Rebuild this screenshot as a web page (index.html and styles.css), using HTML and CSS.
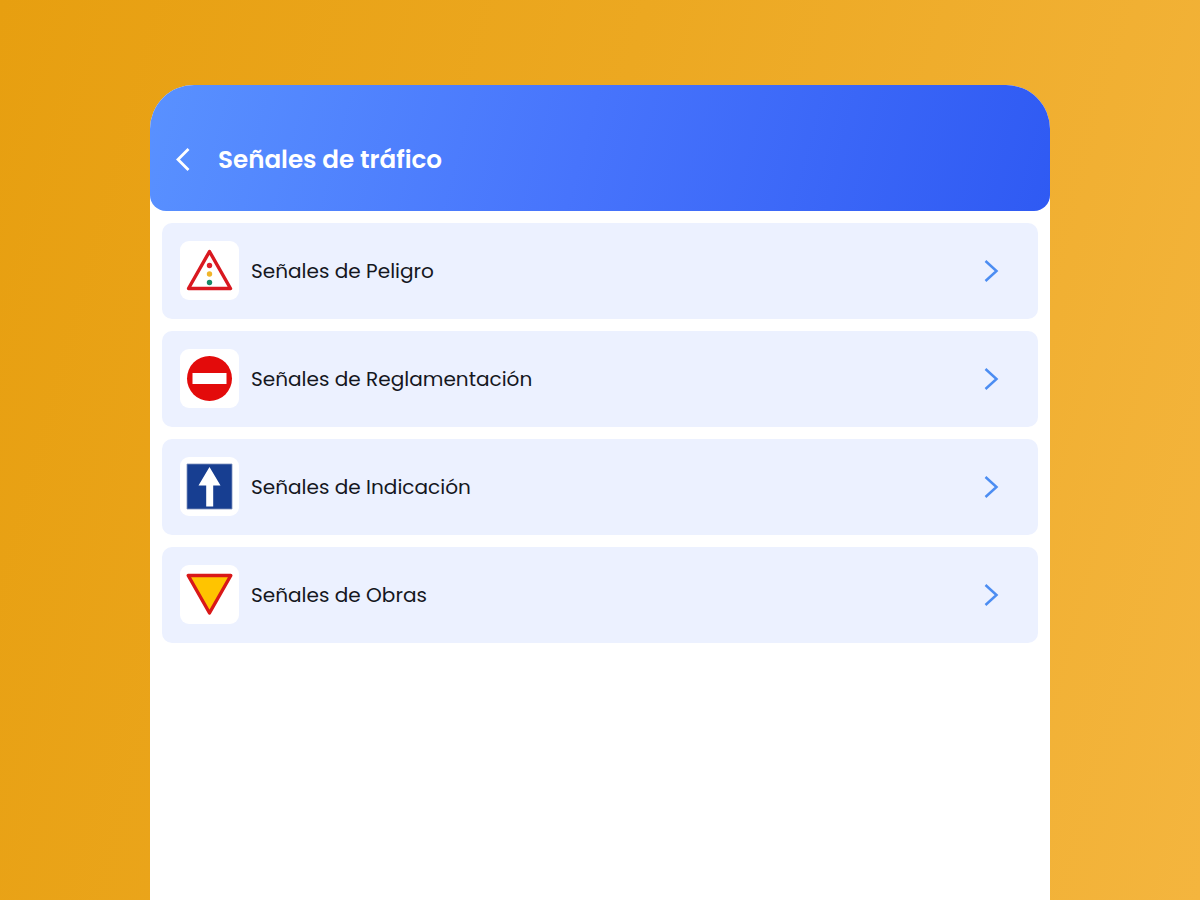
FILE: index.html
```html
<!DOCTYPE html>
<html lang="es">
<head>
<meta charset="utf-8">
<title>Señales de tráfico</title>
<link rel="stylesheet" href="styles.css">
</head>
<body>
<main class="screen">
  <header class="header">
    <svg class="back" viewBox="0 0 16 24"><path d="M14.500 1 4 11.500 14.500 22"/></svg>
    <h1 class="title">Señales de tráfico</h1>
  </header>
  <nav class="list">
    <a class="card">
      <span class="tile"><svg class="sign" viewBox="-.5 -.5 49 49"><path d="M24 5 45 42H3Z" fill="#fff" stroke="#d91820" stroke-width="3.400" stroke-linejoin="round"/><circle cx="24" cy="19" r="2.700" fill="#e0202a"/><circle cx="24" cy="27.500" r="2.700" fill="#f0b52a"/><circle cx="24" cy="36" r="2.700" fill="#168a68"/></svg></span>
      <span class="label">Señales de Peligro</span>
      <svg class="chevron" viewBox="0 0 16 24"><path d="M2.500 2l11 10-11 10"/></svg>
    </a>
    <a class="card">
      <span class="tile"><svg class="sign" viewBox="-.5 -.5 49 49"><circle cx="24" cy="24" r="22.500" fill="#e30b0b"/><path d="M7 18.500h34v11H7Z" fill="#fff"/></svg></span>
      <span class="label">Señales de Reglamentación</span>
      <svg class="chevron" viewBox="0 0 16 24"><path d="M2.500 2l11 10-11 10"/></svg>
    </a>
    <a class="card">
      <span class="tile"><svg class="sign" viewBox="-.5 -.5 49 49"><path d="M1.500 1.500h45v45h-45Z" fill="#173e91" stroke="#8193be" stroke-width=".8"/><path d="M24 4.500 35 23h-7.300v21h-7V23H13Z" fill="#fff"/></svg></span>
      <span class="label">Señales de Indicación</span>
      <svg class="chevron" viewBox="0 0 16 24"><path d="M2.500 2l11 10-11 10"/></svg>
    </a>
    <a class="card">
      <span class="tile"><svg class="sign" viewBox="-.5 -.5 49 49"><path d="M2.700 5h42.600L24 42.500Z" fill="#ffc400" stroke="#d91818" stroke-width="3.400" stroke-linejoin="round"/></svg></span>
      <span class="label">Señales de Obras</span>
      <svg class="chevron" viewBox="0 0 16 24"><path d="M2.500 2l11 10-11 10"/></svg>
    </a>
  </nav>
</main>
</body>
</html>
```
FILE: styles.css
```css
* { box-sizing: border-box; }
body {
  margin: 0;
  height: 900px;
  padding: 85px 150px 0;
  overflow: hidden;
  background: linear-gradient(105deg, #e79f10 0%, #eca821 45%, #f4b53e 100%);
  font-family: Poppins, Inter, sans-serif;
}
.screen {
  height: 815px;
  background: #fff;
  border-radius: 44px 44px 0 0;
}
.header {
  display: flex;
  align-items: center;
  height: 126px;
  padding: 24px 24px 0;
  border-radius: 44px 44px 16px 16px;
  background: linear-gradient(105deg, #5991ff 0%, #4774fc 48%, #2f5af3 100%);
}
.back {
  width: 16px;
  height: 24px;
  margin-right: 28px;
  fill: none;
  stroke: #fff;
  stroke-width: 2.800;
}
.title {
  margin: 0;
  color: #fff;
  font-size: 24.600px;
  font-weight: 600;
  line-height: 36px;
  white-space: nowrap;
}
.list {
  display: grid;
  gap: 12px;
  padding: 12px;
}
.card {
  display: flex;
  align-items: center;
  height: 96px;
  padding: 0 39px 0 18px;
  border-radius: 10px;
  background: #ecf1ff;
}
.tile {
  display: flex;
  width: 59px;
  height: 59px;
  margin: 0 12px 1px 0;
  padding: 5px;
  border-radius: 9px;
  background: #fff;
}
.sign {
  width: 49px;
  height: 49px;
}
.label {
  color: #15171e;
  font-size: 20.060px;
  line-height: 30px;
  white-space: nowrap;
}
.chevron {
  width: 16px;
  height: 24px;
  margin-left: auto;
  fill: none;
  stroke: #4c8df2;
  stroke-width: 2.500;
}
```
